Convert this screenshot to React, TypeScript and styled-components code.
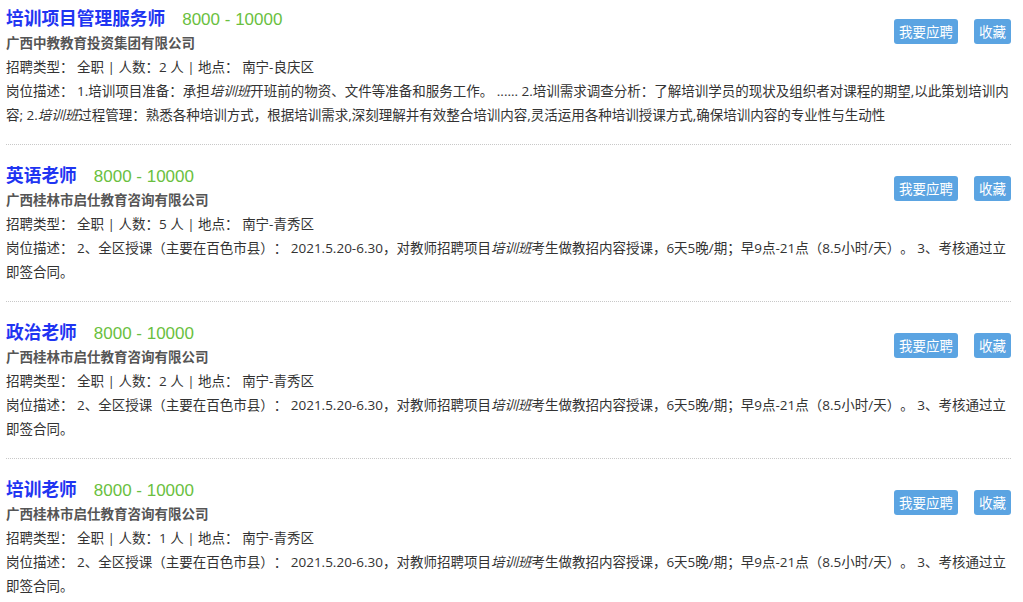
import React from 'react';
import styled, { createGlobalStyle } from 'styled-components';

const GlobalStyle = createGlobalStyle`
  body {
    margin: 0;
    background: #fff;
    font-family: "Open Sans", "Noto Sans CJK SC", sans-serif;
    color: #333;
    text-spacing-trim: space-all;
  }
`;

const List = styled.ul`
  list-style: none;
  margin: 0;
  padding: 0 12px 0 6px;
`;

const Item = styled.li`
  padding: 15px 0 17px;
  border-bottom: 1px dotted #c8c8c8;

  &:first-child {
    padding-top: 3px;
  }
`;

const Head = styled.div`
  display: flex;
  justify-content: space-between;
  align-items: flex-start;
`;

const TitleRow = styled.div`
  display: flex;
  align-items: baseline;
  height: 28px;
  line-height: 28px;
`;

const Title = styled.a`
  font-family: "Noto Sans CJK SC", sans-serif;
  font-size: 17.7px;
  font-weight: bold;
  color: #1f35f2;
  text-decoration: none;
`;

const Salary = styled.span`
  margin-left: 17px;
  font-size: 17px;
  color: #6abf40;
  font-family: "Liberation Sans", sans-serif;
`;

const Company = styled.div`
  font-size: 13.5px;
  font-weight: bold;
  color: #555;
  line-height: 24px;
`;

const Actions = styled.div`
  display: flex;
  gap: 16px;
  margin-top: 16px;
`;

const Button = styled.button`
  height: 25px;
  padding: 0 5px;
  border: none;
  border-radius: 3px;
  background: #5ba4e2;
  color: #fff;
  font-family: "Noto Sans CJK SC", sans-serif;
  font-size: 13.5px;
  line-height: 25px;
  cursor: pointer;
`;

const Line = styled.div`
  font-size: 13.5px;
  line-height: 24px;
  color: #333;

  em {
    font-style: italic;
  }
`;

type Job = {
  title: string;
  company: string;
  count: number;
  place: string;
  desc: React.ReactNode;
};

const teachDesc = (
  <>
    岗位描述： 2、全区授课（主要在百色市县）： 2021.5.20-6.30，对教师招聘项目<em>培训班</em>考生做教招内容授课，6天5晚/期；早9点-21点（8.5小时/天）。 3、考核通过立即签合同。
  </>
);

const jobs: Job[] = [
  {
    title: '培训项目管理服务师',
    company: '广西中教教育投资集团有限公司',
    count: 2,
    place: '南宁-良庆区',
    desc: (
      <>
        岗位描述： 1.培训项目准备：承担<em>培训班</em>开班前的物资、文件等准备和服务工作。 ...... 2.培训需求调查分析：了解培训学员的现状及组织者对课程的期望,以此策划培训内容; 2.<em>培训班</em>过程管理：熟悉各种培训方式，根据培训需求,深刻理解并有效整合培训内容,灵活运用各种培训授课方式,确保培训内容的专业性与生动性
      </>
    ),
  },
  { title: '英语老师', company: '广西桂林市启仕教育咨询有限公司', count: 5, place: '南宁-青秀区', desc: teachDesc },
  { title: '政治老师', company: '广西桂林市启仕教育咨询有限公司', count: 2, place: '南宁-青秀区', desc: teachDesc },
  { title: '培训老师', company: '广西桂林市启仕教育咨询有限公司', count: 1, place: '南宁-青秀区', desc: teachDesc },
];

export default function App() {
  return (
    <>
      <GlobalStyle />
      <List>
        {jobs.map((job) => (
          <Item key={job.title}>
            <Head>
              <div>
                <TitleRow>
                  <Title href="#">{job.title}</Title>
                  <Salary>8000 - 10000</Salary>
                </TitleRow>
                <Company>{job.company}</Company>
              </div>
              <Actions>
                <Button>我要应聘</Button>
                <Button>收藏</Button>
              </Actions>
            </Head>
            <Line>
              招聘类型： 全职 | 人数：{job.count} 人 | 地点： {job.place}
            </Line>
            <Line>{job.desc}</Line>
          </Item>
        ))}
      </List>
    </>
  );
}
